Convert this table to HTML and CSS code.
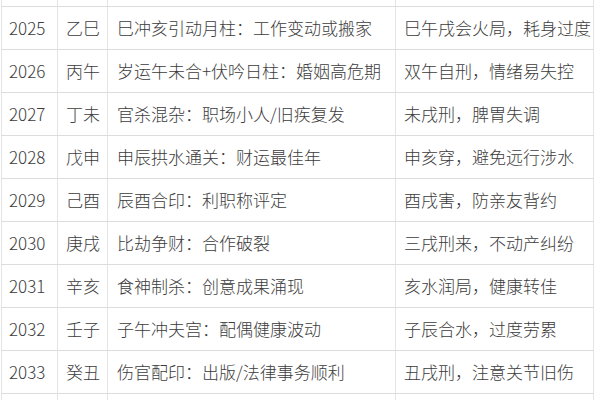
FILE: index.html
```html
<!DOCTYPE html>
<html lang="zh-CN">
<head>
<meta charset="utf-8">
<link rel="stylesheet" href="styles.css">
</head>
<body>
<div class="frame">
<table class="fortune">
  <colgroup>
    <col class="c-year"><col class="c-gz"><col class="c-desc"><col class="c-eff">
  </colgroup>
  <tbody>
    <tr class="cut"><td></td><td></td><td></td><td></td></tr>
    <tr><td>2025</td><td>乙巳</td><td>巳冲亥引动月柱：工作变动或搬家</td><td>巳午戌会火局，耗身过度</td></tr>
    <tr><td>2026</td><td>丙午</td><td>岁运午未合+伏吟日柱：婚姻高危期</td><td>双午自刑，情绪易失控</td></tr>
    <tr><td>2027</td><td>丁未</td><td>官杀混杂：职场小人/旧疾复发</td><td>未戌刑，脾胃失调</td></tr>
    <tr><td>2028</td><td>戊申</td><td>申辰拱水通关：财运最佳年</td><td>申亥穿，避免远行涉水</td></tr>
    <tr><td>2029</td><td>己酉</td><td>辰酉合印：利职称评定</td><td>酉戌害，防亲友背约</td></tr>
    <tr><td>2030</td><td>庚戌</td><td>比劫争财：合作破裂</td><td>三戌刑来，不动产纠纷</td></tr>
    <tr><td>2031</td><td>辛亥</td><td>食神制杀：创意成果涌现</td><td>亥水润局，健康转佳</td></tr>
    <tr><td>2032</td><td>壬子</td><td>子午冲夫宫：配偶健康波动</td><td>子辰合水，过度劳累</td></tr>
    <tr><td>2033</td><td>癸丑</td><td>伤官配印：出版/法律事务顺利</td><td>丑戌刑，注意关节旧伤</td></tr>
    <tr class="tail"><td></td><td></td><td></td><td></td></tr>
  </tbody>
</table>
</div>
</body>
</html>
```

FILE: styles.css
```css
html, body {
  margin: 0;
  padding: 0;
  background: #ffffff;
}
body {
  font-family: "Noto Sans CJK SC", "Noto Sans", sans-serif;
  color: #3c3c3c;
}
.frame {
  width: 600px;
  height: 400px;
  overflow: hidden;
}
.fortune {
  border-collapse: collapse;
  table-layout: fixed;
  width: 593px;
  margin: -37px 0 0 1px;
  font-size: 17px;
  font-weight: 300;
}
.c-year { width: 56px; }
.c-gz { width: 50px; }
.c-desc { width: 288px; }
.c-eff { width: 198px; }
.fortune td {
  height: 43px;
  padding: 0 0 0 7px;
  border-top: 1px solid #dcdcdc;
  border-bottom: 1px solid #dcdcdc;
  border-left: 1px solid #e4e4e4;
  border-right: 1px solid #e4e4e4;
  white-space: nowrap;
  overflow: hidden;
  vertical-align: middle;
  line-height: 20px;
  box-sizing: border-box;
}
.fortune td:nth-child(2) { padding-left: 8px; }
.fortune td:nth-child(3) { padding-left: 9px; }
.fortune td:nth-child(4) { padding-left: 8px; }
.fortune .tail td { height: 20px; }
```
